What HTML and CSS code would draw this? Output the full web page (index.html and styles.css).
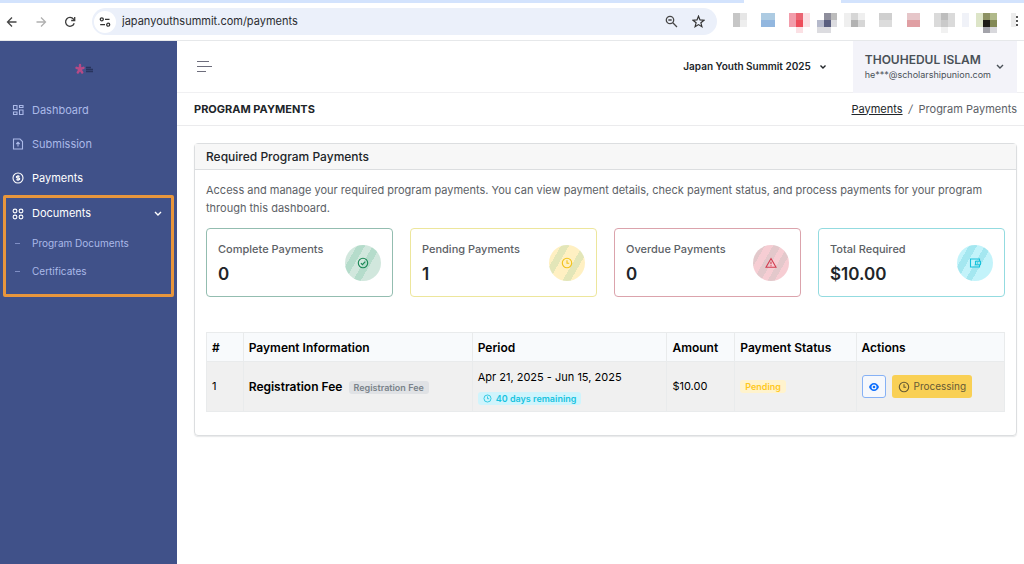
FILE: index.html
```html
<!DOCTYPE html>
<html lang="en">
<head>
  <meta charset="UTF-8">
  <meta name="viewport" content="width=device-width, initial-scale=1.0">
  <title>Program Payments</title>
  <link rel="stylesheet" href="styles.css">
</head>
<body>
  <!-- browser bar -->
  <div class="browser">
    <div class="tab-strip"><span class="tab"></span></div>
    <div class="toolbar">
      <div class="nav-buttons">
        <button type="button" aria-label="Back">
          <svg width="12" height="12" viewBox="0 0 12 12" fill="none" stroke="#474747" stroke-width="1.3"><path d="M10.500 6H1.500M6 1.500L1.500 6L6 10.500"/></svg>
        </button>
        <button type="button" aria-label="Forward">
          <svg width="12" height="12" viewBox="0 0 12 12" fill="none" stroke="#b0b0b0" stroke-width="1.3"><path d="M1.500 6h9M6 1.500L10.500 6L6 10.500"/></svg>
        </button>
        <button type="button" aria-label="Reload">
          <svg width="12" height="12" viewBox="0 0 12 12" fill="none" stroke="#3c3c3c" stroke-width="1.300"><path d="M10.200 7.200A4.400 4.400 0 1 1 9.500 3.200L10.500 4.300"/><path d="M10.700 1v3.500H7.200"/></svg>
        </button>
      </div>
      <div class="address">
        <span class="site-info">
          <svg width="12" height="12" viewBox="0 0 12 12" fill="none" stroke="#333" stroke-width="1.300"><circle cx="2.800" cy="3.300" r="1.500"/><path d="M6 3.300h4.500M1.200 8.700H6"/><circle cx="9.200" cy="8.700" r="1.500"/></svg>
        </span>
        <input type="text" class="url" aria-label="Address" value="japanyouthsummit.com/payments">
        <button type="button" aria-label="Zoom">
          <svg width="13" height="13" viewBox="0 0 13 13" fill="none" stroke="#474747" stroke-width="1.300"><circle cx="5" cy="5" r="3.700"/><path d="M7.800 7.800L12 12M3.300 5h3.400"/></svg>
        </button>
        <button type="button" aria-label="Bookmark">
          <svg width="13" height="13" viewBox="0 0 13 13" fill="none" stroke="#333" stroke-width="1.200"><path d="M6.500 1.200L8 4.900l4 .3-3.100 2.600 1 3.900-3.400-2.100-3.400 2.100 1-3.900L1 5.200l4-.3z"/></svg>
        </button>
      </div>
      <svg class="extensions" width="291" height="21" viewBox="0 0 291 21" shape-rendering="crispEdges">
        <path fill="#c6c6c6" d="M0 0h7v14H0z"/><path fill="#e6e6e6" d="M7 0h7v7H7z"/><path fill="#eee" d="M7 7h7v7H7z"/>
        <path fill="#adcbe2" d="M28 0h14v7H28z"/><path fill="#92b7df" d="M28 7h14v7H28z"/>
        <path fill="#f29dab" d="M56 0h7v14h-7z"/><path fill="#ea6472" d="M63 0h7v7h-7z"/><path fill="#ee4d5a" d="M63 7h7v7h-7z"/><path fill="#fbe0e4" d="M70 0h7v14h-7zM63 14h7v6h-7z"/>
        <path fill="#8e8e9c" d="M91 0h7v7h-7z"/><path fill="#bcbcbc" d="M98 0h6v7h-6z"/><path fill="#b5b9cb" d="M84 7h7v7h-7z"/><path fill="#5a5f80" d="M91 7h7v7h-7z"/><path fill="#dcdce0" d="M84 14h14v6H84zM98 7h6v7h-6z"/>
        <path fill="#efefef" d="M111 0h21v14h-21z"/><path fill="#d6d6d6" d="M118 0h7v7h-7zM125 7h7v7h-7z"/><path fill="#b2b2b2" d="M118 7h7v7h-7z"/>
        <path fill="#cfcfcf" d="M146 0h13v7h-13z"/><path fill="#dcdcdc" d="M146 7h13v7h-13z"/>
        <path fill="#e6c6c9" d="M174 0h13v7h-13z"/><path fill="#e09fa3" d="M174 7h13v7h-13z"/>
        <path fill="#dadada" d="M201 0h21v14h-21z"/><path fill="#bdbdbd" d="M208 0h7v7h-7z"/><path fill="#cacaca" d="M208 7h7v7h-7z"/><path fill="#f1f1f1" d="M208 14h7v6h-7z"/>
        <path fill="#f0f2f8" d="M229 0h7v14h-7z"/>
        <path fill="#dde5c8" d="M243 0h7v14h-7z"/><path fill="#8c9163" d="M250 0h7v7h-7z"/><path fill="#b0b98a" d="M257 0h7v7h-7z"/><path fill="#1d1b16" d="M250 7h7v7h-7z"/><path fill="#838956" d="M257 7h7v7h-7z"/><path fill="#a3a3aa" d="M250 14h7v6h-7z"/><path fill="#d8d8dc" d="M257 14h7v6h-7z"/>
        <path fill="#ececec" d="M278 0h5v14h-5z"/><path fill="#555" d="M283 3h2v2h-2zM283 7h2v2h-2zM283 11h2v2h-2z"/>
      </svg>
    </div>
  </div>

  <div class="layout">
    <aside class="sidebar">
      <a href="#" class="logo" aria-label="Home">
        <svg width="20" height="12" viewBox="0 0 20 12"><g stroke="#b54a86" stroke-width="2.400" stroke-linecap="round"><path d="M5 6V2M5 6L1.500 4.800M5 6l3.500-1.200M5 6L2.800 9.500M5 6l2.200 3.500"/></g><path d="M11 4.500h5M11 6.500h7M11 8.500h7" stroke="#28345e" stroke-width="1.500"/></svg>
      </a>
      <nav class="menu">
        <a href="#">
          <svg class="icon" viewBox="0 0 12 12"><path d="M1.500 1.500h3.500v4h-3.500zM7.500 1.500h3.500v2h-3.500zM1.500 8h3.500v2.500h-3.500zM7.500 6h3.500v4.500h-3.500z"/></svg>
          Dashboard
        </a>
        <a href="#">
          <svg class="icon" viewBox="0 0 12 12"><path d="M1.500 1h6.500l2.500 2.500v7.500h-9zM6 8.500V4.500M4.300 6L6 4.300L7.700 6"/></svg>
          Submission
        </a>
        <a href="#" class="active">
          <svg class="icon" viewBox="0 0 12 12"><circle cx="6" cy="6" r="5"/><path d="M7.800 4.200H5.200a.9.900 0 0 0 0 1.800h1.600a.9.900 0 0 1 0 1.800H4.200M6 3v6"/></svg>
          Payments
        </a>
        <div class="group">
          <a href="#" class="active">
            <svg class="icon" viewBox="0 0 12 12"><circle cx="3" cy="3" r="1.900"/><circle cx="9" cy="3" r="1.900"/><circle cx="3" cy="9" r="1.900"/><circle cx="9" cy="9" r="1.900"/></svg>
            Documents
            <svg class="chevron" width="8" height="6" viewBox="0 0 8 6"><path d="M1 1l3 3 3-3"/></svg>
          </a>
          <a href="#" class="sub">Program Documents</a>
          <a href="#" class="sub">Certificates</a>
        </div>
      </nav>
    </aside>

    <div class="page">
      <header class="topbar">
        <button type="button" class="hamburger" aria-label="Toggle menu"><span></span><span></span><span></span></button>
        <button type="button" class="program">
          Japan Youth Summit 2025
          <svg class="chevron" width="8" height="6" viewBox="0 0 8 6"><path d="M1.500 1.500L4 4l2.500-2.500"/></svg>
        </button>
        <button type="button" class="user">
          <span>
            <strong>THOUHEDUL ISLAM</strong>
            <small>he***@scholarshipunion.com</small>
          </span>
          <svg class="chevron" width="8" height="6" viewBox="0 0 8 6"><path d="M1 1l3 3 3-3"/></svg>
        </button>
      </header>

      <div class="title-bar">
        <h1>Program Payments</h1>
        <nav class="breadcrumb"><a href="#">Payments</a><i>/</i><span>Program Payments</span></nav>
      </div>

      <main class="card">
        <h2>Required Program Payments</h2>
        <div class="card-body">
          <p>Access and manage your required program payments. You can view payment details, check payment status, and process payments for your program through this dashboard.</p>

          <div class="stats">
            <div class="stat success">
              <div class="stat-text"><h3>Complete Payments</h3><b>0</b></div>
              <span class="bubble"><svg class="icon" viewBox="0 0 12 12"><circle cx="6" cy="6" r="4.700"/><path d="M3.900 6.100l1.500 1.500 2.900-3"/></svg></span>
            </div>
            <div class="stat warning">
              <div class="stat-text"><h3>Pending Payments</h3><b>1</b></div>
              <span class="bubble"><svg class="icon" viewBox="0 0 12 12"><circle cx="6" cy="6" r="4.700"/><path d="M6 3.200V6.300h2.200"/></svg></span>
            </div>
            <div class="stat danger">
              <div class="stat-text"><h3>Overdue Payments</h3><b>0</b></div>
              <span class="bubble"><svg class="icon" viewBox="0 0 12 12"><path d="M6 1.500L11 10.300H1zM6 4.800v2.500M6 8.200v1"/></svg></span>
            </div>
            <div class="stat info">
              <div class="stat-text"><h3>Total Required</h3><b>$10.00</b></div>
              <span class="bubble"><svg class="icon" viewBox="0 0 12 12"><path d="M10.500 4V2h-9v8h9V8M6.500 4.200h5v3.600h-5zM8 6h1"/></svg></span>
            </div>
          </div>

          <table>
            <thead>
              <tr>
                <th class="col-no">#</th>
                <th class="col-info">Payment Information</th>
                <th class="col-period">Period</th>
                <th class="col-amount">Amount</th>
                <th class="col-status">Payment Status</th>
                <th>Actions</th>
              </tr>
            </thead>
            <tbody>
              <tr>
                <td>1</td>
                <td><strong>Registration Fee</strong> <span class="badge gray">Registration Fee</span></td>
                <td>
                  <div class="period">
                    <span>Apr 21, 2025 - Jun 15, 2025</span>
                    <span class="badge cyan"><svg class="icon" viewBox="0 0 12 12"><circle cx="6" cy="6" r="4.700"/><path d="M6 3.200V6.300h2.200"/></svg>40 days remaining</span>
                  </div>
                </td>
                <td>$10.00</td>
                <td><span class="badge yellow">Pending</span></td>
                <td>
                  <div class="actions">
                    <button type="button" class="btn view" aria-label="View"><svg width="12" height="12" viewBox="0 0 12 12"><path fill="#0d6efd" fill-rule="evenodd" d="M6 2C3.500 2 1.800 3.700 1 6c.8 2.300 2.500 4 5 4s4.200-1.700 5-4C10.200 3.700 8.500 2 6 2zm0 1.500a2.500 2.500 0 1 1 0 5 2.500 2.500 0 0 1 0-5z"/><circle cx="6" cy="6" r="1.300" fill="#0d6efd"/></svg></button>
                    <button type="button" class="btn processing"><svg class="icon" viewBox="0 0 12 12"><circle cx="6" cy="6" r="4.700"/><path d="M6 3.200V6.300h2.200"/></svg>Processing</button>
                  </div>
                </td>
              </tr>
            </tbody>
          </table>
        </div>
      </main>
    </div>
  </div>
</body>
</html>
```

FILE: styles.css
```css
* {
  box-sizing: border-box;
}

body {
  display: flex;
  flex-direction: column;
  min-height: 100vh;
  margin: 0;
  font-family: Inter, "Liberation Sans", sans-serif;
  font-size: 11px;
  line-height: 17px;
  color: #212529;
  background: #fff;
}

h1, h2, h3, p {
  margin: 0;
}

a {
  color: inherit;
  text-decoration: none;
}

button {
  display: flex;
  align-items: center;
  padding: 0;
  border: 0;
  background: none;
  font: inherit;
  color: inherit;
}

.icon {
  width: 12px;
  height: 12px;
  flex: none;
  fill: none;
  stroke: currentColor;
  stroke-width: 1.1;
}

.chevron {
  flex: none;
  fill: none;
  stroke: currentColor;
  stroke-width: 1.4;
}

/* browser bar */
.browser {
  border-bottom: 1px solid #e6e8ea;
}

.tab-strip {
  display: flex;
  justify-content: flex-end;
  height: 3px;
  padding-right: 183px;
  background: #d3e3fd;
}

.tab {
  width: 97px;
  background: #fff;
}

.toolbar {
  display: flex;
  align-items: center;
  height: 37px;
}

.nav-buttons {
  display: flex;
  gap: 17px;
  padding: 0 16px 0 6px;
}

.address {
  display: flex;
  flex: 1;
  align-items: center;
  gap: 14px;
  height: 27px;
  padding: 0 12px 0 2px;
  border-radius: 14px;
  background: #ebf0fa;
}

.site-info {
  display: flex;
  align-items: center;
  justify-content: center;
  width: 22px;
  height: 22px;
  border-radius: 50%;
  background: #fff;
}

.url {
  flex: 1;
  min-width: 0;
  margin-left: -10px;
  border: 0;
  background: none;
  font: inherit;
  color: #2a2c30;
}

.extensions {
  flex: none;
  margin: 4px 0 0 16px;
}

/* sidebar */
.layout {
  display: flex;
  flex: 1;
}

.sidebar {
  flex: none;
  width: 177px;
  background: #405189;
  color: #abb9e8;
}

.logo {
  display: flex;
  justify-content: center;
  padding: 22px 8px 18px 0;
}

.menu a {
  display: flex;
  align-items: center;
  gap: 8px;
  height: 34px;
  padding: 0 12px;
  font-size: 11px;
}

.menu .active {
  color: #fff;
}

.group {
  margin: 0 3px;
  padding-bottom: 9px;
  border: 3px solid #e8963c;
  border-radius: 2px;
}

.menu .group a {
  height: 31px;
  padding: 0 9px 0 6px;
}

.group .chevron {
  margin-left: auto;
}

.menu .group .sub {
  height: 28px;
  font-size: 10px;
}

.sub::before {
  content: "";
  width: 5px;
  height: 1px;
  margin: 0 4px 0 3px;
  background: #7f8ec4;
}

/* page */
.page {
  flex: 1;
  min-width: 0;
}

.topbar {
  display: flex;
  align-items: center;
  height: 52px;
  padding-right: 7px;
  border-bottom: 1px solid #f0f0f2;
}

.hamburger {
  flex-direction: column;
  align-items: flex-start;
  gap: 4px;
  margin-left: 20px;
}

.hamburger span {
  width: 12px;
  height: 1px;
  background: #6d6d7c;
}

.hamburger span:nth-child(2) {
  width: 15px;
}

.hamburger span:nth-child(3) {
  width: 9px;
}

.program {
  gap: 8px;
  margin: 0 26px 0 auto;
  font-size: 10px;
  font-weight: 600;
}

.user {
  gap: 5px;
  height: 52px;
  padding: 0 13px 0 12px;
  background: #f3f3f9;
  text-align: left;
  color: #495057;
}

.user strong, .user small {
  display: block;
  line-height: 15px;
}

.user strong {
  font-size: 12px;
  font-weight: 600;
}

.user small {
  font-size: 9px;
}

.title-bar {
  display: flex;
  align-items: center;
  justify-content: space-between;
  height: 33px;
  padding: 0 7px 0 17px;
  border-bottom: 1px solid #ebebed;
}

.title-bar h1 {
  font-size: 11px;
  font-weight: 700;
  text-transform: uppercase;
}

.breadcrumb {
  display: flex;
  gap: 6px;
  color: #5c6166;
}

.breadcrumb a {
  color: #212529;
  text-decoration: underline;
}

.card {
  margin: 17px 7px 0 17px;
  border: 1px solid #dcdee0;
  border-radius: 4px;
  box-shadow: 0 1px 1px rgba(56, 65, 74, 0.12);
}

.card h2 {
  padding: 4px 11px;
  border-bottom: 1px solid #dcdee0;
  background: #f7f7f7;
  font-size: 12px;
  font-weight: 500;
}

.card-body {
  padding: 11px 11px 23px;
}

.card-body p {
  line-height: 18px;
  color: #5c6166;
}

.stats {
  display: grid;
  grid-template-columns: repeat(4, 1fr);
  gap: 17px;
  margin: 11px 0 35px;
}

.stat {
  display: flex;
  align-items: center;
  justify-content: space-between;
  height: 69px;
  padding: 0 11px;
  border: 1px solid currentColor;
  border-radius: 4px;
}

.stat-text {
  padding-top: 2px;
}

.stat h3 {
  margin-bottom: 4px;
  font-size: 11px;
  font-weight: 500;
  color: #5c6166;
}

.stat b {
  display: block;
  font-size: 17px;
  font-weight: 600;
  line-height: 24px;
  color: #212529;
}

.bubble {
  display: flex;
  align-items: center;
  justify-content: center;
  width: 36px;
  height: 36px;
  border-radius: 50%;
}

.success {
  color: #93bdb0;
}

.success .bubble {
  color: #198754;
  background: linear-gradient(120deg, #d1e7dd 22%, #b5dccb 22% 36%, #d1e7dd 36% 50%, #b5dccb 50% 64%, #d1e7dd 64%);
}

.warning {
  color: #ede69c;
}

.warning .bubble {
  color: #f2c21c;
  background: linear-gradient(120deg, #fff0c2 22%, #e3e6b8 22% 36%, #fff0c2 36% 60%, #e3e6b8 60% 74%, #fff0c2 74%);
}

.danger {
  color: #dba3ac;
}

.danger .bubble {
  color: #d23c50;
  background: linear-gradient(120deg, #e3c8cb 22%, #f6cdd3 22% 36%, #e3c8cb 36% 50%, #f6cdd3 50% 62%, #e3c8cb 62% 74%, #f6cdd3 74%);
}

.info {
  color: #93dbe0;
}

.info .bubble {
  color: #16c2dc;
  background: linear-gradient(120deg, #c3f3fa 22%, #a4e7f0 22% 36%, #c3f3fa 36% 50%, #a4e7f0 50% 62%, #c3f3fa 62%);
}

/* payments table */
table {
  width: 100%;
  border-collapse: collapse;
  table-layout: fixed;
  color: #000;
}

th, td {
  padding: 5px;
  border: 1px solid #e9ebec;
  text-align: left;
}

th {
  height: 29px;
  background: #f8fafc;
  font-size: 12px;
  font-weight: 600;
}

td {
  height: 50px;
  background: #f0f0f0;
}

td strong {
  font-size: 12px;
  font-weight: 600;
}

.col-no {
  width: 4.6%;
}

.col-info {
  width: 28.7%;
}

.col-period {
  width: 24.4%;
}

.col-amount {
  width: 8.5%;
}

.col-status {
  width: 15.2%;
}

.period {
  display: flex;
  flex-direction: column;
  align-items: flex-start;
  gap: 6px;
}

.badge {
  display: inline-flex;
  align-items: center;
  gap: 4px;
  height: 13px;
  padding: 0 5px;
  border-radius: 3px;
  font-size: 9px;
  font-weight: 600;
  line-height: 13px;
}

.badge .icon {
  width: 9px;
  height: 9px;
}

.gray {
  margin-left: 3px;
  background: #e0e2e5;
  color: #7a828a;
}

.cyan {
  background: #cff4fc;
  color: #19c3e0;
}

.yellow {
  background: #fff3cd;
  color: #ffc81e;
}

.actions {
  display: flex;
  gap: 6px;
}

.btn {
  height: 23px;
  padding: 0 5px;
  border-radius: 3px;
}

.view {
  border: 1px solid #86b1f5;
  background: #f6f8fc;
}

.processing {
  gap: 4px;
  padding: 0 6px;
  background: #f9d055;
  font-size: 10px;
  color: #665a35;
}
```
